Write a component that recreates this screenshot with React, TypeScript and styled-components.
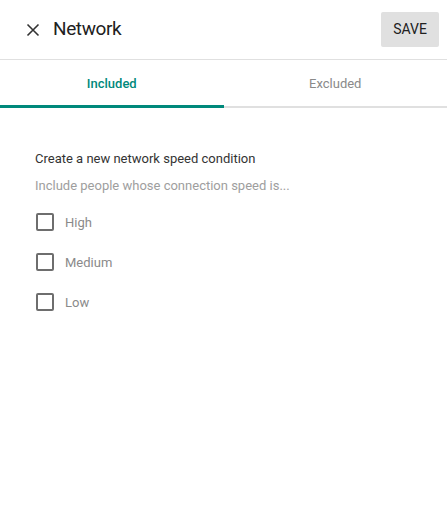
import styled, { createGlobalStyle } from 'styled-components';
import { useState } from 'react';

const GlobalStyle = createGlobalStyle`
  body {
    margin: 0;
    background: #ffffff;
    font-family: Roboto, 'Liberation Sans', sans-serif;
  }
`;

const StyledPanel = styled.div`
  width: 447px;
  height: 526px;
  background: #ffffff;
`;

const StyledHeader = styled.header`
  height: 60px;
  box-sizing: border-box;
  display: flex;
  align-items: center;
  padding: 0 8px 0 21px;
  border-bottom: 1px solid #e0e0e0;
`;

const StyledCloseButton = styled.button`
  width: 24px;
  height: 24px;
  padding: 0;
  border: none;
  background: none;
  display: flex;
  align-items: center;
  justify-content: center;
  color: #333333;
  cursor: pointer;
`;

const StyledTitle = styled.h1`
  margin: 0 0 2px 8px;
  flex: 1;
  font-size: 19px;
  letter-spacing: -0.4px;
  font-weight: 400;
  color: #212121;
`;

const StyledSaveButton = styled.button`
  width: 58px;
  height: 35px;
  margin-top: -1px;
  border: none;
  border-radius: 2px;
  background: #e0e0e0;
  color: #212121;
  font-family: Roboto, 'Liberation Sans', sans-serif;
  font-size: 14px;
  font-weight: 400;
  cursor: pointer;
`;

const StyledTabs = styled.div`
  display: flex;
  height: 48px;
  border-bottom: 2px solid #e0e0e0;
  box-sizing: border-box;
`;

const StyledTab = styled.button<{ $active: boolean }>`
  flex: 1;
  border: none;
  background: none;
  padding: 2px 0 0;
  margin-bottom: -2px;
  border-bottom: 3px solid ${(p) => (p.$active ? '#00897b' : 'transparent')};
  color: ${(p) => (p.$active ? '#00897b' : '#8a8a8a')};
  font-family: Roboto, 'Liberation Sans', sans-serif;
  font-size: 13px;
  font-weight: ${(p) => (p.$active ? 500 : 400)};
  cursor: pointer;
`;

const StyledContent = styled.div`
  padding: 43px 35px 0;
`;

const StyledHeading = styled.p`
  margin: 0;
  font-size: 13px;
  color: #333333;
`;

const StyledHint = styled.p`
  margin: 12px 0 9px;
  font-size: 13px;
  color: #9e9e9e;
`;

const StyledOptions = styled.div`
  display: flex;
  flex-direction: column;
`;

const StyledOption = styled.label`
  display: flex;
  align-items: center;
  height: 40px;
  gap: 11px;
  font-size: 13px;
  color: #8a8a8a;
  cursor: pointer;
`;

const StyledBox = styled.span<{ $checked: boolean }>`
  width: 18px;
  height: 18px;
  box-sizing: border-box;
  margin-left: 1px;
  border: 2px solid ${(p) => (p.$checked ? '#00897b' : '#6e6e6e')};
  background: ${(p) => (p.$checked ? '#00897b' : 'transparent')};
  border-radius: 2px;
`;

const options = ['High', 'Medium', 'Low'];

function App(): JSX.Element {
  const [tab, setTab] = useState('Included');
  const [checked, setChecked] = useState<string[]>([]);

  const toggle = (o: string) =>
    setChecked((c) => (c.includes(o) ? c.filter((x) => x !== o) : [...c, o]));

  return (
    <StyledPanel>
      <GlobalStyle />
      <StyledHeader>
        <StyledCloseButton aria-label="Close">
          <svg width="24" height="24" viewBox="0 0 24 24">
            <path
              d="M6.5 6.5 L17.5 17.5 M17.5 6.5 L6.5 17.5"
              stroke="currentColor"
              strokeWidth="1.6"
              fill="none"
            />
          </svg>
        </StyledCloseButton>
        <StyledTitle>Network</StyledTitle>
        <StyledSaveButton>SAVE</StyledSaveButton>
      </StyledHeader>
      <StyledTabs>
        {['Included', 'Excluded'].map((t) => (
          <StyledTab key={t} $active={tab === t} onClick={() => setTab(t)}>
            {t}
          </StyledTab>
        ))}
      </StyledTabs>
      <StyledContent>
        <StyledHeading>Create a new network speed condition</StyledHeading>
        <StyledHint>Include people whose connection speed is...</StyledHint>
        <StyledOptions>
          {options.map((o) => (
            <StyledOption key={o} onClick={() => toggle(o)}>
              <StyledBox $checked={checked.includes(o)} />
              {o}
            </StyledOption>
          ))}
        </StyledOptions>
      </StyledContent>
    </StyledPanel>
  );
}

export default App;
